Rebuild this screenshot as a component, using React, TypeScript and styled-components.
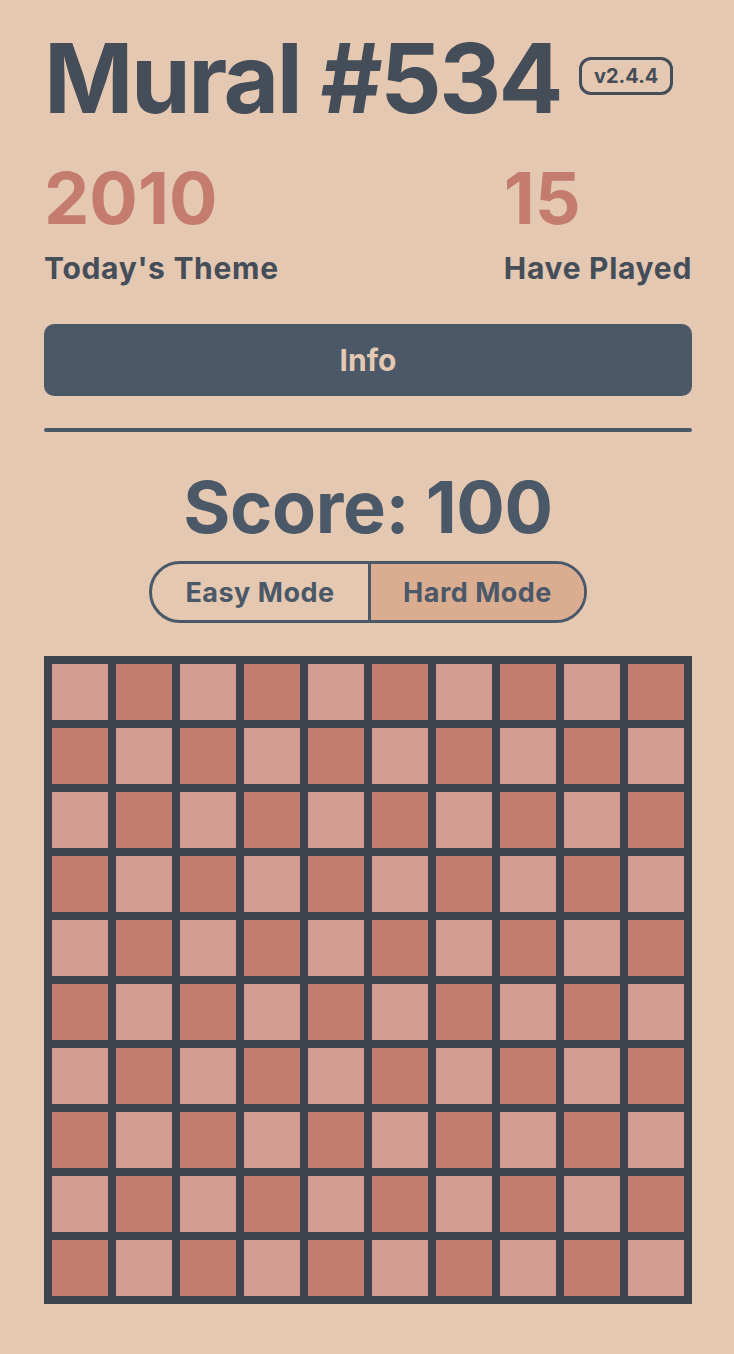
import React from "react";
import styled, { createGlobalStyle } from "styled-components";

const GlobalStyle = createGlobalStyle`
  html, body {
    margin: 0;
    padding: 0;
    background: #e4c8b2;
  }
  body {
    font-family: Inter, "Noto Sans", sans-serif;
    -webkit-font-smoothing: antialiased;
  }
`;

const Page = styled.main`
  width: 648px;
  padding: 30px 42px 50px 44px;
  display: flex;
  flex-direction: column;
`;

const Header = styled.header`
  display: flex;
  align-items: flex-start;
  gap: 18px;
`;

const Title = styled.h1`
  margin: 0;
  font-size: 96px;
  line-height: 1;
  font-weight: 700;
  color: #444d58;
  letter-spacing: -2.5px;
`;

const Badge = styled.span`
  margin-top: 27px;
  box-sizing: border-box;
  height: 38px;
  padding: 0 12px;
  display: inline-flex;
  align-items: center;
  border: 3px solid #444d58;
  border-radius: 12px;
  font-size: 20px;
  font-weight: 700;
  color: #444d58;
`;

const Stats = styled.section`
  margin-top: 36px;
  display: flex;
  justify-content: space-between;
`;

const Stat = styled.div`
  display: flex;
  flex-direction: column;
  gap: 16px;
`;

const StatValue = styled.div`
  font-size: 72px;
  line-height: 1;
  font-weight: 700;
  color: #c47c6e;
`;

const StatLabel = styled.div`
  font-size: 30px;
  line-height: 36px;
  font-weight: 700;
  letter-spacing: 0.7px;
  color: #444d58;
`;

const InfoButton = styled.button`
  margin-top: 38px;
  height: 72px;
  border: none;
  border-radius: 10px;
  background: #4b5867;
  color: #e4c8b2;
  font-family: inherit;
  font-size: 30px;
  font-weight: 700;
  cursor: pointer;
`;

const Divider = styled.hr`
  margin: 32px 0 0;
  height: 4px;
  border: none;
  border-radius: 2px;
  background: #4b5867;
`;

const Score = styled.h2`
  margin: 39px 0 0;
  text-align: center;
  font-size: 72px;
  line-height: 1;
  font-weight: 700;
  letter-spacing: -0.4px;
  color: #4b5867;
`;

const Toggle = styled.div`
  margin: 18px auto 0;
  box-sizing: border-box;
  width: 438px;
  height: 62px;
  display: grid;
  grid-template-columns: 1fr 1fr;
  border: 3px solid #4b5867;
  border-radius: 31px;
  overflow: hidden;
`;

const ToggleOption = styled.button<{ $active?: boolean }>`
  border: none;
  background: ${(p) => (p.$active ? "#dbad90" : "transparent")};
  color: #4b5867;
  font-family: inherit;
  font-size: 27px;
  font-weight: 700;
  letter-spacing: 0.5px;
  padding: 0;
  cursor: pointer;
  & + & {
    border-left: 3px solid #4b5867;
  }
`;

const Board = styled.div`
  margin-top: 33px;
  display: grid;
  grid-template-columns: repeat(10, 56px);
  grid-auto-rows: 56px;
  gap: 8px;
  padding: 8px;
  background: #3d444e;
`;

const Cell = styled.div<{ $dark: boolean }>`
  background: ${(p) => (p.$dark ? "#c27d6f" : "#d49b90")};
`;

export default function App() {
  const cells = Array.from({ length: 100 }, (_, i) => {
    const r = Math.floor(i / 10);
    const c = i % 10;
    return (r + c) % 2 === 1;
  });
  return (
    <>
      <GlobalStyle />
      <Page>
        <Header>
          <Title>Mural #534</Title>
          <Badge>v2.4.4</Badge>
        </Header>
        <Stats>
          <Stat>
            <StatValue>2010</StatValue>
            <StatLabel>Today's Theme</StatLabel>
          </Stat>
          <Stat>
            <StatValue>15</StatValue>
            <StatLabel>Have Played</StatLabel>
          </Stat>
        </Stats>
        <InfoButton>Info</InfoButton>
        <Divider />
        <Score>Score: 100</Score>
        <Toggle>
          <ToggleOption>Easy Mode</ToggleOption>
          <ToggleOption $active>Hard Mode</ToggleOption>
        </Toggle>
        <Board>
          {cells.map((dark, i) => (
            <Cell key={i} $dark={dark} />
          ))}
        </Board>
      </Page>
    </>
  );
}
